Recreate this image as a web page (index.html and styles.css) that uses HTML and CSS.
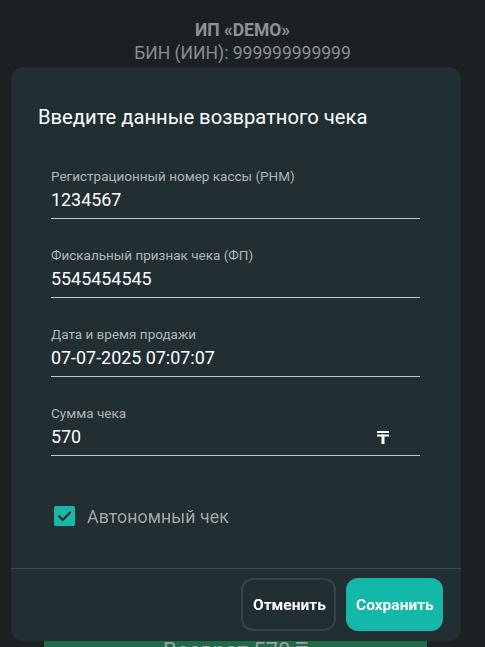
FILE: index.html
```html
<!DOCTYPE html>
<html lang="ru">
<head>
<meta charset="utf-8">
<title>Возврат</title>
<link rel="stylesheet" href="styles.css">
</head>
<body>
<div class="page">
  <header class="org">
    <div class="org-name">ИП «DEMO»</div>
    <div class="org-bin">БИН (ИИН): 999999999999</div>
  </header>
  <div class="page-spacer"></div>
  <div class="pay-bar">Возврат 570 ₸</div>
</div>

<div class="modal">
  <div class="modal-body">
    <h1 class="modal-title">Введите данные возвратного чека</h1>
    <div class="form">
      <div class="field">
        <div class="field-label">Регистрационный номер кассы (РНМ)</div>
        <div class="field-value">1234567</div>
      </div>
      <div class="field">
        <div class="field-label">Фискальный признак чека (ФП)</div>
        <div class="field-value">5545454545</div>
      </div>
      <div class="field">
        <div class="field-label">Дата и время продажи</div>
        <div class="field-value">07-07-2025 07:07:07</div>
      </div>
      <div class="field">
        <div class="field-label">Сумма чека</div>
        <div class="field-value field-value-money">
          <span>570</span>
          <svg class="tenge" width="12" height="13" viewBox="0 0 12 13" aria-label="₸">
            <rect x="0" y="0" width="12" height="2" fill="#ffffff"/>
            <rect x="0" y="3.5" width="12" height="2" fill="#ffffff"/>
            <rect x="4.5" y="3.5" width="3" height="9.5" fill="#ffffff"/>
          </svg>
        </div>
      </div>
    </div>
    <label class="check-row">
      <span class="checkbox">
        <svg width="21" height="20" viewBox="0 0 21 20">
          <path d="M5 10.2 L8.8 14 L16 6.5" fill="none" stroke="#1f2c30" stroke-width="2.2" stroke-linecap="round" stroke-linejoin="round"/>
        </svg>
      </span>
      <span class="check-label">Автономный чек</span>
    </label>
  </div>
  <div class="modal-footer">
    <button class="btn btn-outline">Отменить</button>
    <button class="btn btn-primary">Сохранить</button>
  </div>
</div>
</body>
</html>
```

FILE: styles.css
```css
html, body {
  margin: 0;
  padding: 0;
}

body {
  background: #1b2123;
  font-family: Roboto, "Noto Sans", "Liberation Sans", sans-serif;
  width: 485px;
  height: 647px;
  overflow: hidden;
}

.page {
  display: flex;
  flex-direction: column;
  align-items: center;
  height: 647px;
  overflow: hidden;
}

.org {
  padding-top: 19px;
  text-align: center;
  color: #8e9293;
}

.org-name {
  font-weight: 700;
  font-size: 17.5px;
  line-height: 22px;
}

.org-bin {
  font-size: 17.5px;
  line-height: 24px;
  color: #8a8e8f;
}

.page-spacer {
  flex: 1;
}

.pay-bar {
  align-self: flex-start;
  margin-left: 44px;
  width: 383px;
  height: 7px;
  flex: none;
  background: #1f6a47;
  color: #9aa3a0;
  font-size: 22px;
  line-height: 22px;
  text-align: center;
  overflow: hidden;
}

.modal {
  position: fixed;
  left: 11px;
  top: 67px;
  width: 450px;
  background: #212e32;
  border-radius: 12px;
  display: flex;
  flex-direction: column;
}

.modal-body {
  padding: 38px 0 32px 27px;
}

.modal-title {
  margin: 0;
  font-size: 20.2px;
  font-weight: 400;
  line-height: 24px;
  color: #ffffff;
}

.form {
  display: flex;
  flex-direction: column;
  gap: 28px;
  margin-top: 39px;
  padding-left: 13px;
  width: 369px;
}

.field {
  display: flex;
  flex-direction: column;
  gap: 4px;
  padding-bottom: 6px;
  border-bottom: 1px solid #c4c9ca;
}

.field-label {
  font-size: 13.5px;
  line-height: 16px;
  color: #b1b6b7;
}

.field-value {
  font-size: 17.9px;
  line-height: 24px;
  color: #ffffff;
}

.field-value-money {
  display: flex;
  justify-content: space-between;
  align-items: center;
  padding-right: 31px;
}

.tenge {
  display: block;
  margin-top: 1px;
}

.check-row {
  display: flex;
  align-items: center;
  gap: 12px;
  margin-top: 40px;
  padding-left: 16px;
  height: 40px;
}

.checkbox {
  width: 21px;
  height: 20px;
  background: #16b8a7;
  border-radius: 2px;
  display: flex;
}

.check-label {
  font-size: 17.9px;
  color: #a3a8a9;
}

.modal-footer {
  border-top: 1px solid #3a474b;
  display: flex;
  justify-content: flex-end;
  gap: 10px;
  padding: 9px 18px 10px;
}

.btn {
  height: 53px;
  border-radius: 12px;
  font-family: Roboto, "Noto Sans", "Liberation Sans", sans-serif;
  font-size: 15.5px;
  font-weight: 700;
  color: #ffffff;
  padding: 0 10px;
  cursor: pointer;
}

.btn-outline {
  background: transparent;
  border: 2px solid #36444a;
  width: 95px;
}

.btn-primary {
  background: #14b8a8;
  border: none;
  width: 97px;
}
```
